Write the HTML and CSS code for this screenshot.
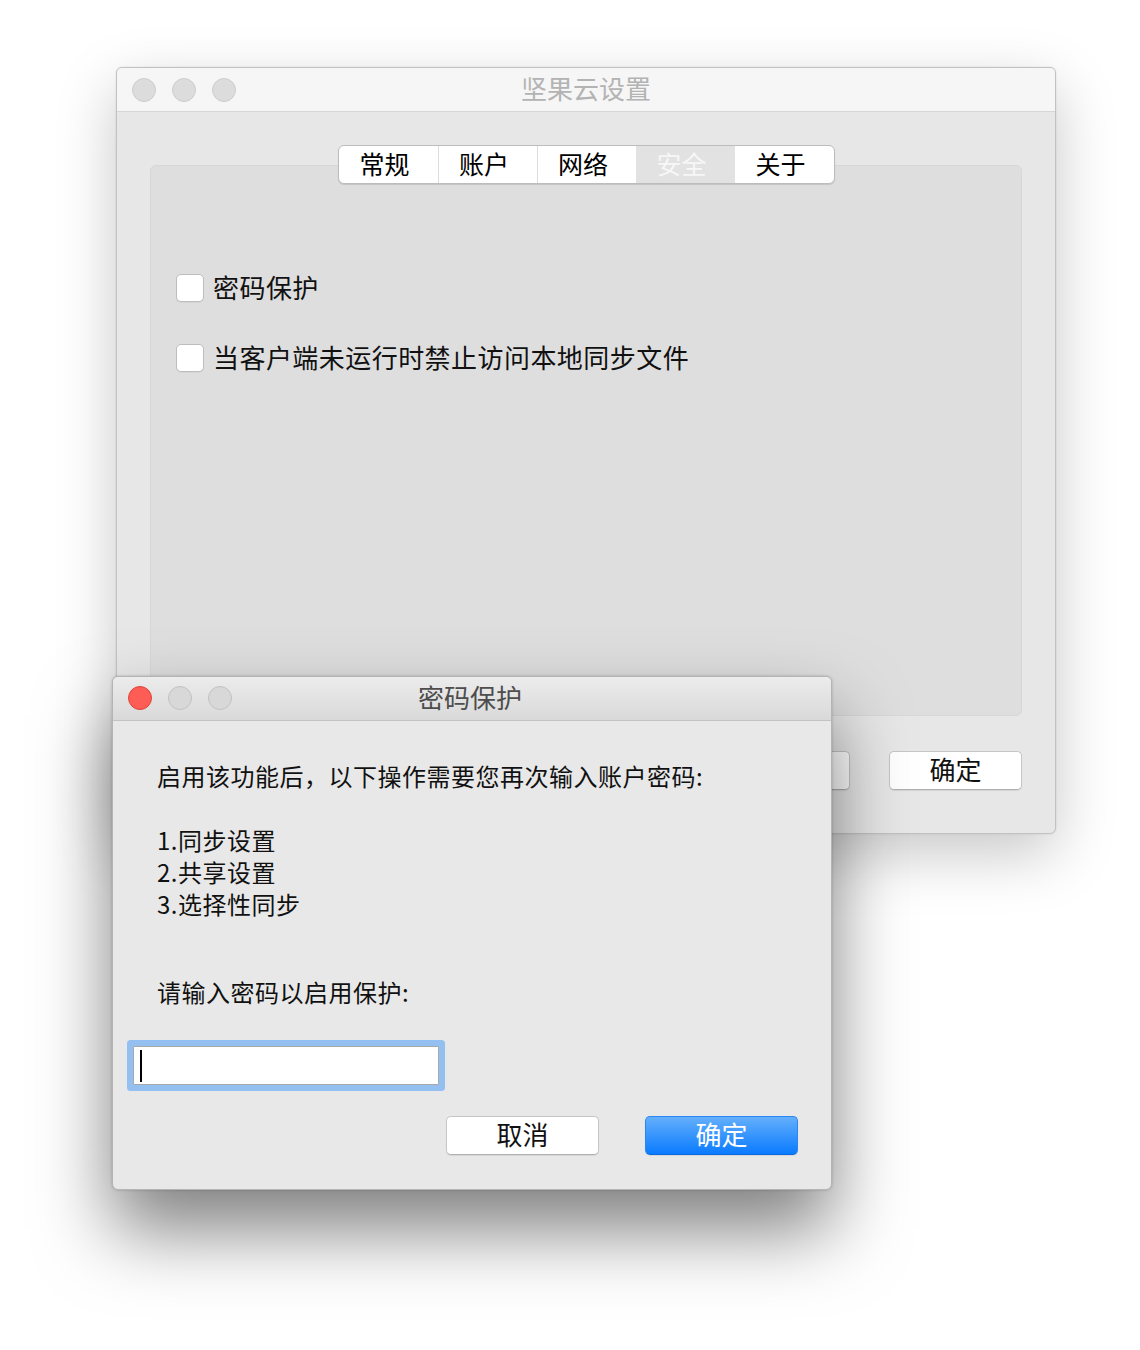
FILE: index.html
```html
<!DOCTYPE html>
<html lang="zh-CN">
<head>
<meta charset="utf-8">
<title>坚果云设置</title>
<link rel="stylesheet" href="styles.css">
</head>
<body>
<div class="desktop">
  <div class="window main-window">
    <div class="titlebar inactive">
      <div class="lights">
        <span class="light"></span><span class="light"></span><span class="light"></span>
      </div>
      <div class="title">坚果云设置</div>
    </div>
    <div class="content">
      <div class="tabs">
        <div class="tab">常规</div>
        <div class="tab">账户</div>
        <div class="tab">网络</div>
        <div class="tab selected">安全</div>
        <div class="tab">关于</div>
      </div>
      <div class="group">
        <label class="check-row"><span class="checkbox"></span><span class="check-label">密码保护</span></label>
        <label class="check-row"><span class="checkbox"></span><span class="check-label">当客户端未运行时禁止访问本地同步文件</span></label>
      </div>
      <div class="main-buttons">
        <div class="btn">取消</div>
        <div class="btn">确定</div>
      </div>
    </div>
  </div>

  <div class="window dialog">
    <div class="titlebar active">
      <div class="lights">
        <span class="light red"></span><span class="light"></span><span class="light"></span>
      </div>
      <div class="title">密码保护</div>
    </div>
    <div class="dialog-body">
      <p class="line intro">启用该功能后，以下操作需要您再次输入账户密码:</p>
      <div class="list">
        <p class="line">1.同步设置</p>
        <p class="line">2.共享设置</p>
        <p class="line">3.选择性同步</p>
      </div>
      <p class="line prompt">请输入密码以启用保护:</p>
      <div class="input"><span class="caret"></span></div>
      <div class="dialog-buttons">
        <div class="btn dlg-btn">取消</div>
        <div class="btn dlg-btn primary">确定</div>
      </div>
    </div>
  </div>
</div>
</body>
</html>
```

FILE: styles.css
```css
* { box-sizing: border-box; }

html, body {
  margin: 0;
  padding: 0;
  background: #ffffff;
}

body {
  font-family: "Noto Sans CJK SC", "Noto Sans", sans-serif;
  color: #111;
}

.desktop {
  position: relative;
  width: 1140px;
  height: 1350px;
  overflow: hidden;
}

.window {
  position: absolute;
  display: flex;
  flex-direction: column;
  border-radius: 6px;
  overflow: hidden;
}

.main-window {
  left: 116px;
  top: 67px;
  width: 940px;
  height: 767px;
  background: #e7e7e7;
  border: 1px solid #c2c2c2;
  box-shadow: 0 20px 60px rgba(0, 0, 0, 0.22), 0 0 2px rgba(0, 0, 0, 0.12);
}

.titlebar {
  position: relative;
  flex: none;
  display: flex;
  align-items: center;
  justify-content: center;
}

.titlebar.inactive {
  height: 44px;
  background: #f6f6f6;
  border-bottom: 1px solid #d6d6d6;
}

.titlebar.active {
  height: 44px;
  background: linear-gradient(#ececec, #d9d9d9);
  border-bottom: 1px solid #c3c3c3;
}

.lights {
  position: absolute;
  left: 15px;
  top: 10px;
  display: flex;
  gap: 16px;
}

.dialog .lights {
  left: 15px;
  top: 9px;
}

.light {
  width: 24px;
  height: 24px;
  border-radius: 50%;
  background: #dcdcdc;
  border: 1px solid #cdcdcd;
}

.dialog .light {
  background: #d8d8d8;
  border-color: #c2c2c2;
}

.dialog .light.red {
  background: #fe5d55;
  border-color: #e0443c;
}

.title {
  font-size: 26px;
  line-height: 30px;
  color: #b3b3b3;
  margin-top: -3px;
}

.dialog .title {
  color: #4d4d4d;
  margin-left: -4px;
}

.content {
  flex: 1;
  display: flex;
  flex-direction: column;
  padding: 33px 33px 0 33px;
}

.tabs {
  position: relative;
  z-index: 1;
  align-self: center;
  display: flex;
  height: 39px;
  background: #fff;
  border: 1px solid #bcbcbc;
  border-radius: 6px;
  box-shadow: 0 1px 1px rgba(0, 0, 0, 0.12);
  overflow: hidden;
  margin-left: 1px;
}

.tab {
  width: 99px;
  display: flex;
  align-items: center;
  justify-content: center;
  padding: 0 8px 4px 0;
  font-size: 25px;
  line-height: 30px;
  color: #000;
  border-left: 1px solid #dcdcdc;
}

.tab:first-child { border-left: none; }

.tab.selected {
  background: #e2e2e2;
  color: #f7f7f7;
  border-left: none;
}

.tab.selected + .tab { border-left: none; }

.group {
  margin-top: -19px;
  height: 551px;
  background: #dedede;
  border: 1px solid #d7d7d7;
  border-radius: 6px;
  padding: 108px 0 0 25px;
  display: flex;
  flex-direction: column;
  gap: 42px;
}

.check-row {
  display: flex;
  align-items: center;
  gap: 9px;
  height: 28px;
}

.checkbox {
  width: 28px;
  height: 28px;
  background: #fff;
  border: 1px solid #bdbdbd;
  border-radius: 5px;
  box-shadow: 0 1px 0 rgba(0, 0, 0, 0.04);
}

.check-label {
  font-size: 26px;
  line-height: 30px;
  color: #111;
  letter-spacing: 0.45px;
  margin-top: -2px;
}

.main-buttons {
  display: flex;
  justify-content: flex-end;
  gap: 39px;
  margin-top: 35px;
}

.btn {
  width: 133px;
  height: 39px;
  display: flex;
  align-items: center;
  justify-content: center;
  padding-bottom: 3px;
  background: #fff;
  border: 1px solid #c6c6c6;
  border-bottom-color: #b0b0b0;
  border-radius: 5px;
  font-size: 26px;
  line-height: 30px;
  color: #111;
  box-shadow: 0 1px 1px rgba(0, 0, 0, 0.08);
}

.dialog {
  left: 112px;
  top: 676px;
  width: 720px;
  height: 514px;
  background: #e8e8e8;
  border: 1px solid #b4b4b4;
  box-shadow: 0 40px 75px rgba(0, 0, 0, 0.5), 0 0 3px rgba(0, 0, 0, 0.2);
}

.dialog-body {
  flex: 1;
  display: flex;
  flex-direction: column;
  padding: 39px 33px 0 14px;
}

.line {
  margin: 0 0 0 30px;
  font-size: 24px;
  line-height: 32px;
  color: #111;
  letter-spacing: 0.5px;
}

.list {
  margin-top: 32px;
  display: flex;
  flex-direction: column;
}

.prompt {
  margin-top: 56px;
}

.input {
  margin: 38px 0 0 6px;
  width: 306px;
  height: 39px;
  background: #fff;
  border: 1px solid #a9a9a9;
  border-radius: 1px;
  box-shadow: 0 0 0 6px #93c0f0;
  display: flex;
  align-items: center;
  padding-left: 6px;
}

.caret {
  width: 2px;
  height: 32px;
  background: #000;
}

.dialog-buttons {
  display: flex;
  justify-content: flex-end;
  gap: 46px;
  margin-top: 31px;
}

.dlg-btn {
  width: 153px;
}

.dlg-btn.primary {
  background: linear-gradient(#64affb, #0a7bff);
  border: 1px solid #2a86f0;
  border-bottom-color: #0a6be0;
  color: #fff;
}
```
